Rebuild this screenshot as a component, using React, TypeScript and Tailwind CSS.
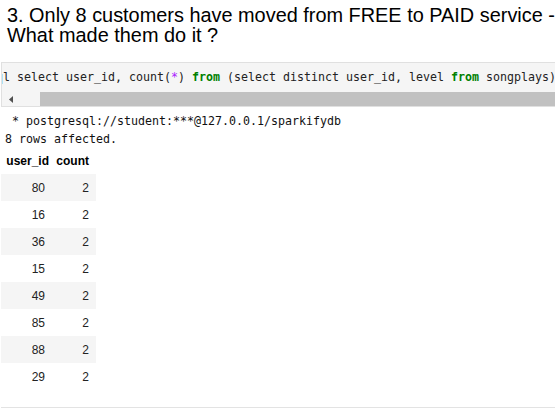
import React from "react";

const rows = [
  ["80", "2"],
  ["16", "2"],
  ["36", "2"],
  ["15", "2"],
  ["49", "2"],
  ["85", "2"],
  ["88", "2"],
  ["29", "2"],
];

const mono = "font-['DejaVu_Sans_Mono','Liberation_Mono',monospace] text-[11.63px]";

function CodeCell() {
  return (
    <div className="ml-[1px] mt-[17px] w-[600px] border border-[#e0e0e0] bg-[#f5f5f5]">
      <div className="flex h-[29px] items-center overflow-hidden">
        <pre className={`ml-[-27px] whitespace-pre text-[#222] ${mono}`}>
          %%sql select user_id, count(<span className="text-[#aa22ff]">*</span>){" "}
          <span className="font-bold text-[#008000]">from</span> (select distinct user_id, level{" "}
          <span className="font-bold text-[#008000]">from</span> songplays) t group by user_id having count(*) &gt; 1;
        </pre>
      </div>
      <div className="flex h-[14px] items-center">
        <div className="flex w-[38px] items-center pl-[7px]">
          <svg width="4" height="7" viewBox="0 0 4 7">
            <path d="M4 0 L0 3.5 L4 7 Z" fill="#505050" />
          </svg>
        </div>
        <div className="h-full flex-1 bg-[#c1c1c1]" />
      </div>
    </div>
  );
}

export default function App() {
  return (
    <div className="relative h-[408px] w-[555px] overflow-hidden bg-white text-black">
      <h2 className="pl-[7px] pt-[5px] font-['Liberation_Sans',Arial,sans-serif] text-[19.9px] leading-[20px]">
        <div className="whitespace-nowrap">3. Only 8 customers have moved from FREE to PAID service -</div>
        <div>What made them do it ?</div>
      </h2>

      <CodeCell />

      <div className={`mt-[5px] pl-[5px] leading-[18px] text-[#111] ${mono}`}>
        <div className="whitespace-pre"> * postgresql://student:***@127.0.0.1/sparkifydb</div>
        <div className="whitespace-pre">8 rows affected.</div>
      </div>

      <div className="ml-[1px] w-[95px] font-['Liberation_Sans',Arial,sans-serif] text-[12px]">
        <div className="grid h-[26px] grid-cols-[52px_43px] items-center font-bold">
          <div className="pr-[4px] text-right">user_id</div>
          <div className="pr-[7px] text-right">count</div>
        </div>
        {rows.map(([id, c], i) => (
          <div
            key={id}
            className={`grid h-[27px] grid-cols-[52px_43px] items-center text-[12px] text-[#222] ${
              i % 2 === 0 ? "bg-[#f5f5f5]" : "bg-white"
            }`}
          >
            <div className="pr-[8px] text-right">{id}</div>
            <div className="pr-[7px] text-right">{c}</div>
          </div>
        ))}
      </div>

      <div className="absolute bottom-0 left-[1px] right-0 h-[1px] bg-[#e3e3e3]" />
    </div>
  );
}
